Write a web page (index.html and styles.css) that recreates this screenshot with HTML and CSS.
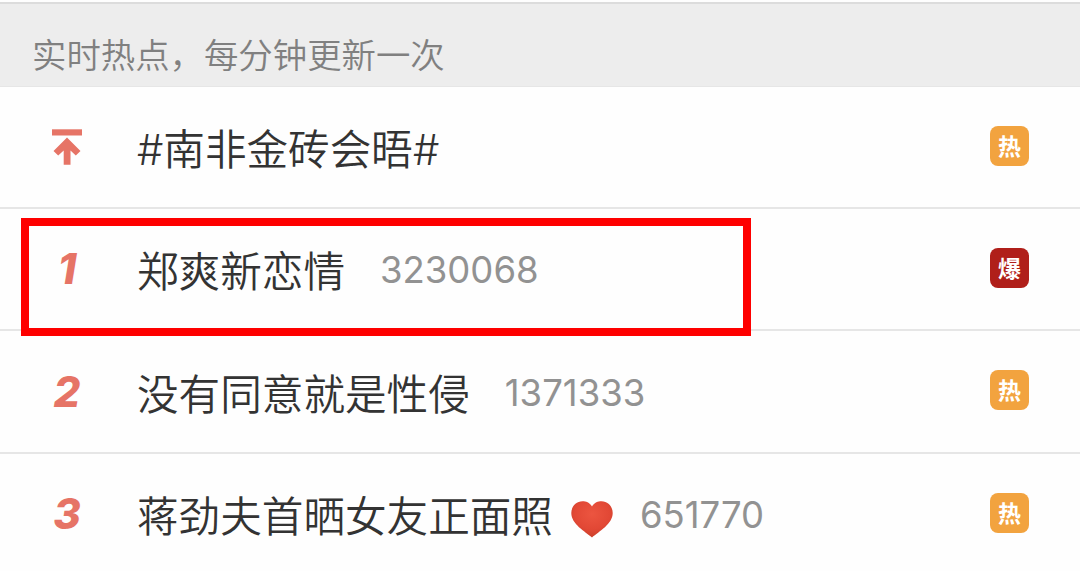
FILE: index.html
```html
<!DOCTYPE html>
<html lang="zh-CN">

<head>
    <meta charset="UTF-8">
    <title>实时热点</title>
    <link rel="stylesheet" href="styles.css">
</head>

<body>
    <div class="tip">实时热点，每分钟更新一次</div>
    <ul class="hot-list">
        <li class="item">
            <span class="rank">
                <svg class="top-icon" width="30" height="36" viewBox="0 0 30 36">
                    <path d="M0 0.300H30V6.500H0Z" />
                    <path d="M15 8.500L28.500 22L23.800 26.600L18.500 21.500V35.700H11.700V21.500L6.200 26.600L1.500 22Z" />
                </svg>
            </span>
            <span class="title">#南非金砖会晤#</span>
            <span class="tag">热</span>
        </li>
        <li class="item on">
            <span class="rank">1</span>
            <span class="title">郑爽新恋情</span>
            <span class="count">3230068</span>
            <span class="tag boom">爆</span>
        </li>
        <li class="item">
            <span class="rank">2</span>
            <span class="title">没有同意就是性侵</span>
            <span class="count">1371333</span>
            <span class="tag">热</span>
        </li>
        <li class="item">
            <span class="rank">3</span>
            <span class="title">蒋劲夫首晒女友正面照</span>
            <svg class="heart" width="42" height="37" viewBox="0 0 42 37">
                <defs>
                    <radialGradient id="heartFill" cx="0.5" cy="0.35" r="0.65">
                        <stop offset="0" stop-color="#ec5540" />
                        <stop offset="0.65" stop-color="#e24835" />
                        <stop offset="1" stop-color="#c93f2a" />
                    </radialGradient>
                </defs>
                <path fill="url(#heartFill)" d="M21 5.500C18.500 1.500 15 0.300 11.500 0.300C5 0.300 0.300 5.500 0.300 12C0.300 23 14 30.500 21 36.500C28 30.500 41.700 23 41.700 12C41.700 5.500 37 0.300 30.500 0.300C27 0.300 23.500 1.500 21 5.500Z" />
            </svg>
            <span class="count">651770</span>
            <span class="tag">热</span>
        </li>
    </ul>
</body>

</html>
```

FILE: styles.css
```css
* {
    margin: 0;
    padding: 0;
    box-sizing: border-box;
}

body {
    height: 571px;
    overflow: hidden;
    padding-top: 2px;
    background: #fefefe;
    font-family: "Noto Sans CJK SC", sans-serif;
}

.tip {
    height: 85px;
    padding: 16px 0 0 32px;
    border-top: 2px solid #dcdcdc;
    border-bottom: 1px solid #e6e6e6;
    background: #ededed;
    font-size: 34.4px;
    font-weight: 350;
    line-height: 66px;
    color: #808080;
}

.hot-list {
    list-style: none;
}

.item {
    display: flex;
    align-items: center;
    position: relative;
    height: 122.6px;
    padding: 0 51px 2px 45px;
    border-bottom: 2px solid #e6e6e6;
    white-space: nowrap;
}

.item:first-child {
    height: 121.5px;
}

/* red frame over the selected row */
.on::after {
    content: "";
    box-sizing: border-box;
    position: absolute;
    left: 21px;
    top: 9px;
    width: 730px;
    height: 118px;
    border: 8px solid #fe0000;
    z-index: 1;
}

.rank {
    width: 44px;
    padding-top: 2px;
    margin-right: 48px;
    font-family: Inter, sans-serif;
    font-size: 42px;
    font-style: italic;
    font-weight: 800;
    text-align: center;
    color: #e67466;
}

.top-icon {
    display: block;
    margin: 0 auto;
    fill: #e67466;
}

.title {
    padding-top: 9px;
    font-family: Inter, "Noto Sans CJK SC", sans-serif;
    font-size: 41.6px;
    font-weight: 350;
    line-height: 60px;
    color: #333;
}

.heart {
    margin: 14px 0 0 18px;
}

.count {
    padding-top: 5px;
    margin-left: 35px;
    font-family: Inter, sans-serif;
    font-size: 36.5px;
    color: #929292;
}

.heart + .count {
    margin-left: 27px;
}

.tag {
    width: 39px;
    height: 40px;
    margin-left: auto;
    border-radius: 8px;
    background: #f2a33f;
    font-size: 23px;
    font-weight: 700;
    line-height: 39px;
    text-align: center;
    color: #fff;
}

.boom {
    background: #b01f1a;
}
```
